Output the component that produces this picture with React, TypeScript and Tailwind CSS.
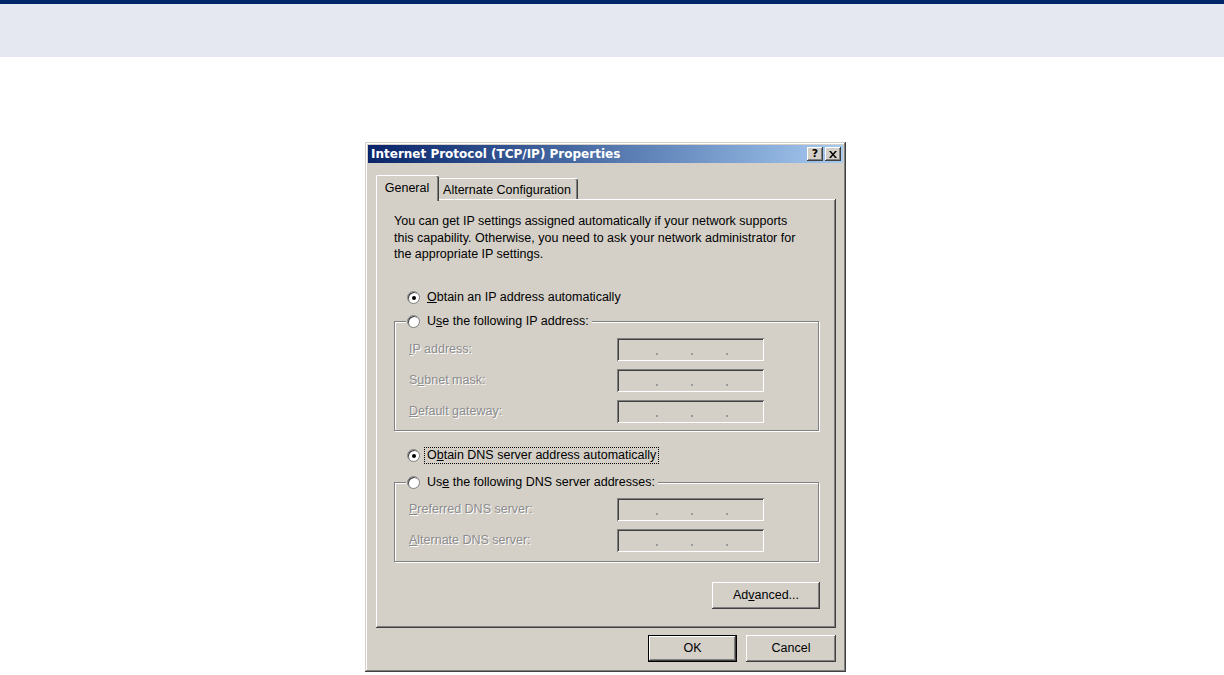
const raised =
  "shadow-[inset_-1px_-1px_0_#404040,inset_1px_1px_0_#ffffff,inset_-2px_-2px_0_#808080,inset_2px_2px_0_#d4d0c8]";
const sunken =
  "shadow-[inset_1px_1px_0_#808080,inset_-1px_-1px_0_#ffffff,inset_2px_2px_0_#404040,inset_-2px_-2px_0_#d4d0c8]";
const disabled = "text-[#8c8c8c] [text-shadow:1px_1px_0_#ffffff]";

const Radio = ({ checked }: { checked?: boolean }) => (
  <span className="w-[13px] h-[13px] shrink-0 rounded-full bg-white border border-[#808080] shadow-[inset_1px_1px_0_#404040] flex items-center justify-center">
    {checked && <span className="w-[4px] h-[4px] rounded-full bg-black" />}
  </span>
);

const IpField = () => (
  <div className={`w-[147px] h-[23px] bg-[#d4d0c8] ${sunken} flex items-end justify-center gap-[33px] pb-[6px] pl-[3px]`}>
    <span className="w-[2px] h-[2px] bg-[#9a9a9a]" />
    <span className="w-[2px] h-[2px] bg-[#9a9a9a]" />
    <span className="w-[2px] h-[2px] bg-[#9a9a9a]" />
  </div>
);

const FieldRow = ({ pre, key_, post }: { pre: string; key_: string; post: string }) => (
  <div className="flex items-center h-[23px]">
    <span className={`w-[208px] ${disabled}`}>
      {pre}
      <u>{key_}</u>
      {post}
    </span>
    <IpField />
  </div>
);

const Group = ({
  label,
  children,
  className,
}: {
  label: React.ReactNode;
  children: React.ReactNode;
  className?: string;
}) => (
  <fieldset
    className={`border border-[#808080] shadow-[inset_1px_1px_0_#ffffff,1px_1px_0_#ffffff] ${className ?? ""}`}
  >
    <legend className="-ml-[3px] px-[1px] bg-[#d4d0c8]">
      <span className="flex items-center gap-[7px] h-[16px] pr-[2px]">
        <Radio />
        <span>{label}</span>
      </span>
    </legend>
    {children}
  </fieldset>
);

const Button = ({
  children,
  isDefault,
  className,
}: {
  children: React.ReactNode;
  isDefault?: boolean;
  className?: string;
}) => (
  <button
    className={`h-[27px] bg-[#d4d0c8] ${raised} ${isDefault ? "outline outline-1 outline-black -outline-offset-1 shadow-[inset_-2px_-2px_0_#404040,inset_2px_2px_0_#ffffff,inset_-3px_-3px_0_#808080]" : ""} ${className ?? ""}`}
  >
    {children}
  </button>
);

export default function App() {
  return (
    <div
      className="min-h-screen bg-white text-[12.5px] text-black"
      style={{ fontFamily: '"Liberation Sans", Arial, sans-serif' }}
    >
      <div className="h-[4px] bg-[#00266a]" />
      <div className="h-[53px] bg-[#e5e8f1]" />

      <div className="pt-[85px] pl-[365px]">
        <div
          className={`w-[481px] p-[3px] bg-[#d4d0c8] shadow-[inset_-1px_-1px_0_#404040,inset_1px_1px_0_#d4d0c8,inset_-2px_-2px_0_#808080,inset_2px_2px_0_#ffffff]`}
        >
          {/* title bar */}
          <div className="h-[18px] flex items-center justify-between pl-[3px] pr-[2px] bg-gradient-to-r from-[#0a246a] to-[#a6caf0]">
            <span
              className="text-white font-bold text-[12px]"
              style={{ fontFamily: '"DejaVu Sans", sans-serif' }}
            >
              Internet Protocol (TCP/IP) Properties
            </span>
            <div className="flex gap-[2px]">
              <span
                className={`w-[16px] h-[14px] bg-[#d4d0c8] ${raised} flex items-center justify-center font-bold text-[11px] leading-none pb-[1px]`}
                style={{ fontFamily: '"DejaVu Sans", sans-serif' }}
              >
                ?
              </span>
              <span className={`w-[16px] h-[14px] bg-[#d4d0c8] ${raised} flex items-center justify-center`}>
                <svg width="8" height="7" viewBox="0 0 8 7">
                  <path d="M0 0h2l2 2.5L6 0h2L5 3.5 8 7H6L4 4.5 2 7H0l3-3.5z" fill="#000" />
                </svg>
              </span>
            </div>
          </div>

          <div className="pl-[8px] pr-[7px]">
            {/* tabs */}
            <div className="mt-[12px] h-[24px] flex items-end">
              <div className="relative z-10 h-[26px] -mb-[2px] w-[63px] bg-[#d4d0c8] border-l border-t border-white rounded-t-[2px] shadow-[inset_-1px_0_0_#404040,inset_-2px_0_0_#808080] flex justify-center pt-[3px] pr-[2px]">
                General
              </div>
              <div className="h-[21px] w-[139px] bg-[#d4d0c8] border-t border-white rounded-t-[2px] shadow-[inset_-1px_0_0_#404040,inset_-2px_0_0_#808080] flex justify-center pt-[2px] pr-[3px]">
                Alternate Configuration
              </div>
            </div>

            {/* panel */}
            <div className={`h-[429px] bg-[#d4d0c8] ${raised} pl-[18px] pr-[17px] pt-[14px] flex flex-col`}>
              <p className="leading-[16.5px]">
                You can get IP settings assigned automatically if your network supports
                <br />
                this capability. Otherwise, you need to ask your network administrator for
                <br />
                the appropriate IP settings.
              </p>

              <div className="mt-[27px] h-[16px] flex items-center gap-[7px] pl-[13px]">
                <Radio checked />
                <span>
                  <u>O</u>btain an IP address automatically
                </span>
              </div>

              <Group
                className="mt-[8px] pl-[14px] pt-[8px] pb-[7px]"
                label={
                  <>
                    U<u>s</u>e the following IP address:
                  </>
                }
              >
                <div className="flex flex-col gap-[8px]">
                  <FieldRow pre="" key_="I" post="P address:" />
                  <FieldRow pre="S" key_="u" post="bnet mask:" />
                  <FieldRow pre="" key_="D" post="efault gateway:" />
                </div>
              </Group>

              <div className="mt-[17px] h-[16px] flex items-center gap-[4px] pl-[13px]">
                <Radio checked />
                <span className="border border-dotted border-black px-[2px] leading-[15px]">
                  O<u>b</u>tain DNS server address automatically
                </span>
              </div>

              <Group
                className="mt-[11px] pl-[14px] pt-[7px] pb-[9px]"
                label={
                  <>
                    Us<u>e</u> the following DNS server addresses:
                  </>
                }
              >
                <div className="flex flex-col gap-[8px]">
                  <FieldRow pre="" key_="P" post="referred DNS server:" />
                  <FieldRow pre="" key_="A" post="lternate DNS server:" />
                </div>
              </Group>

              <div className="mt-[20px] flex justify-end -mr-[1px]">
                <Button className="w-[108px]">
                  Ad<u>v</u>anced...
                </Button>
              </div>
            </div>

            {/* dialog buttons */}
            <div className="mt-[7px] mb-[7px] flex justify-end gap-[9px]">
              <Button isDefault className="w-[89px]">
                OK
              </Button>
              <Button className="w-[90px]">Cancel</Button>
            </div>
          </div>
        </div>
      </div>
    </div>
  );
}
